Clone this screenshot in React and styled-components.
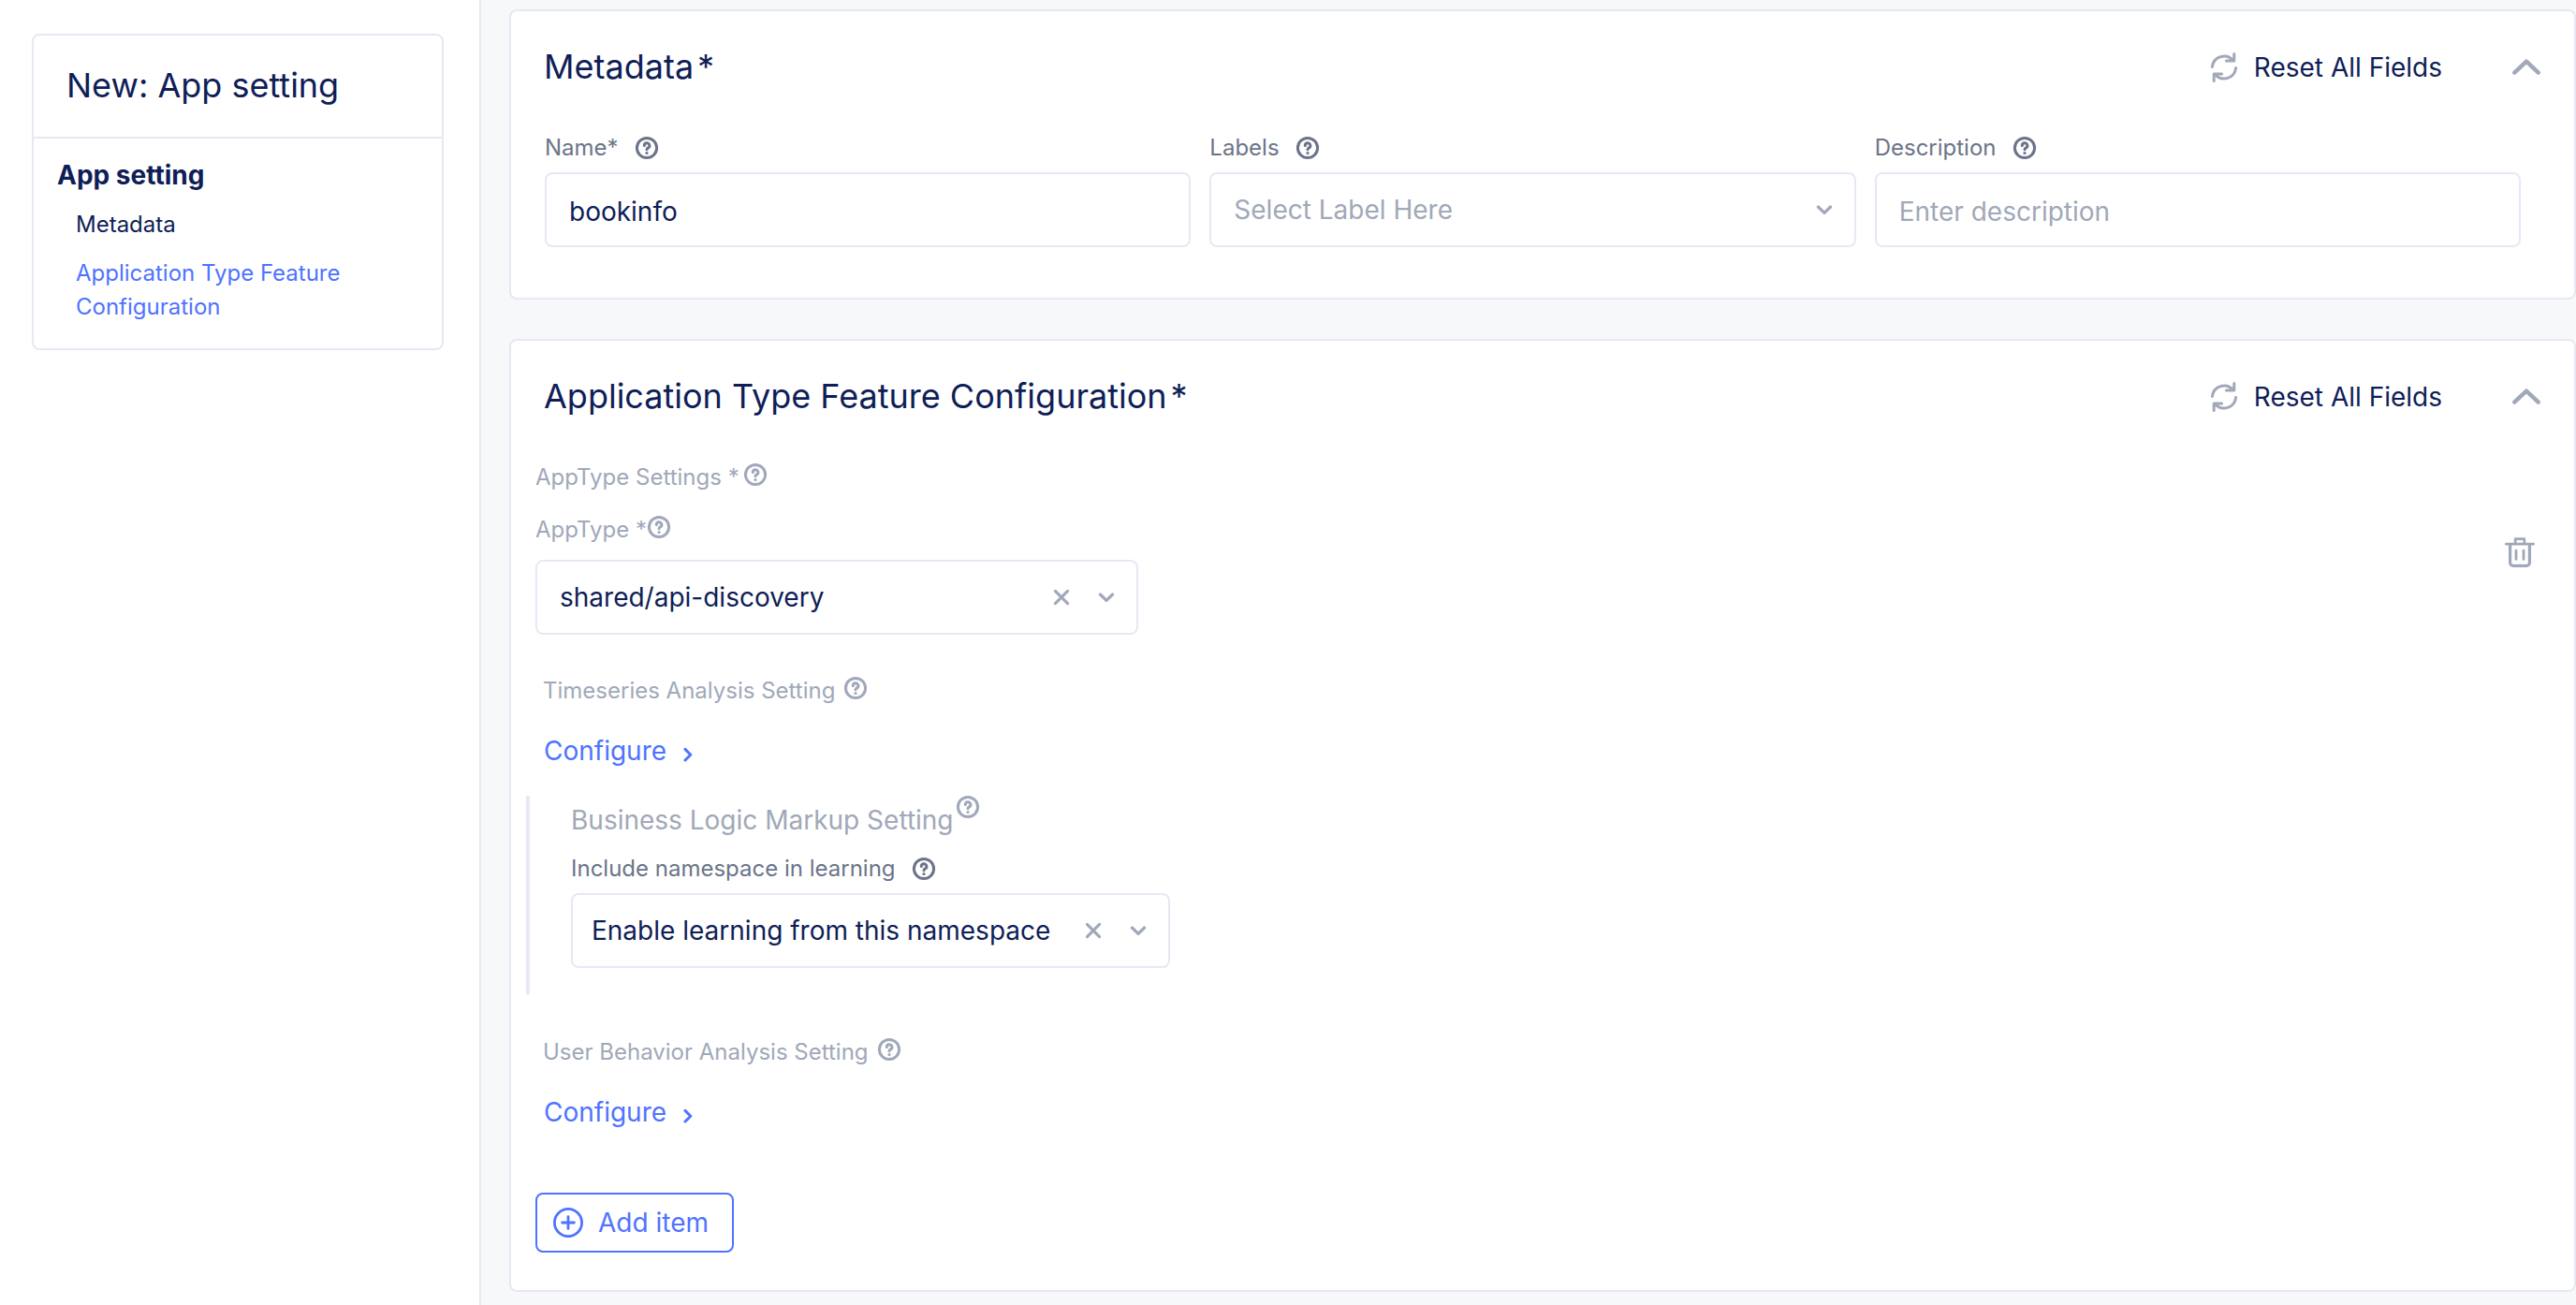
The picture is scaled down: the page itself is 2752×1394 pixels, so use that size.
import React, { useId, useState } from "react";
import styled, { createGlobalStyle } from "styled-components";

const color = {
  ink: "#0f1e57",
  blue: "#4f73ff",
  label: "#6b7489",
  muted: "#a0a8b9",
  line: "#e6e9f3",
  canvas: "#f7f8fa",
};

const GlobalStyle = createGlobalStyle`
  *, *::before, *::after { box-sizing: border-box; }
  html, body { margin: 0; }
  body {
    background: ${color.canvas};
    color: ${color.ink};
    font-family: Inter, "Liberation Sans", sans-serif;
    font-size: 28px;
    line-height: 36px;
  }
  button, input, select { font: inherit; color: inherit; }
`;

const Page = styled.div`
  display: flex;
  min-height: 100vh;
`;

const Sidebar = styled.aside`
  flex: 0 0 514px;
  padding: 36px 38px 36px 34px;
  background: #fff;
  border-right: 2px solid ${color.line};
`;

const Outline = styled.nav`
  border: 2px solid ${color.line};
  border-radius: 8px;
`;

const OutlineTitle = styled.h1`
  margin: 0;
  padding: 31px 35px 33px;
  border-bottom: 2px solid ${color.line};
  font-size: 36px;
  font-weight: 400;
  line-height: 44px;
`;

const OutlineBody = styled.div`
  display: flex;
  flex-direction: column;
  gap: 16px;
  padding: 20px 25px 26px;
`;

const OutlineGroup = styled.h2`
  margin: 0;
  font-size: 28px;
  font-weight: 700;
  line-height: 38px;
`;

const OutlineLink = styled.a`
  padding-left: 20px;
  font-size: 24px;
  text-decoration: none;
  color: ${(p) => (p.$active ? color.blue : color.ink)};
`;

const Main = styled.main`
  flex: 1;
  min-width: 0;
  display: flex;
  flex-direction: column;
  gap: 42px;
  padding: 10px 0 14px 30px;
`;

const Card = styled.section`
  background: #fff;
  border: 2px solid ${color.line};
  border-radius: 8px;
`;

const CardHeader = styled.header`
  display: flex;
  align-items: center;
  height: 48px;
  margin: 35px 34px 46px 35px;
`;

const CardTitle = styled.h2`
  display: flex;
  gap: 4px;
  flex: 1;
  margin: 0;
  font-size: 36px;
  font-weight: 400;
  line-height: 44px;
`;

const PlainButton = styled.button`
  display: inline-flex;
  align-items: center;
  flex: none;
  padding: 0;
  border: 0;
  background: none;
  cursor: pointer;
`;

const ResetButton = styled(PlainButton)`
  gap: 16px;
  margin-right: 73px;
  padding-top: 2px;
`;

const FieldGrid = styled.div`
  display: grid;
  grid-template-columns: repeat(3, minmax(0, 1fr));
  gap: 20px;
  padding: 0 57px 54px 36px;
`;

const Field = styled.div`
  display: flex;
  flex-direction: column;
  gap: ${(p) => p.$gap || 9}px;
  width: ${(p) => p.$width || "auto"};
  max-width: 100%;
`;

const LabelRow = styled.div`
  display: flex;
  align-items: ${(p) => (p.$raised ? "flex-start" : "center")};
  gap: ${(p) => p.$gap ?? 17}px;
  font-size: 24px;
  line-height: 34px;
  color: ${(p) => (p.$muted ? color.muted : color.label)};
`;

const TextInput = styled.input`
  width: 100%;
  height: 80px;
  padding: 4px 24px 0;
  border: 2px solid ${color.line};
  border-radius: 8px;
  background: #fff;
  outline: none;
  &::placeholder { color: ${color.muted}; opacity: 1; }
`;

const SelectBox = styled.div`
  display: flex;
  align-items: center;
  gap: 20px;
  height: 80px;
  padding: 0 18px 0 ${(p) => p.$inset || 24}px;
  border: 2px solid ${color.line};
  border-radius: 8px;
  background: #fff;
  color: ${color.muted};
`;

const NativeSelect = styled.select`
  flex: 1;
  min-width: 0;
  height: 100%;
  padding: 0;
  border: 0;
  outline: none;
  appearance: none;
  background: none;
  color: ${(p) => (p.$empty ? color.muted : color.ink)};
`;

const Settings = styled.div`
  display: flex;
  flex-direction: column;
  align-items: flex-start;
  padding: 0 42px 40px 16px;
`;

const Inset = styled.div`
  padding-left: 10px;
`;

const Item = styled.div`
  display: flex;
  align-items: flex-start;
  justify-content: space-between;
  align-self: stretch;
  margin-top: 22px;
`;

const ItemBody = styled.div`
  display: flex;
  flex-direction: column;
  align-items: flex-start;
`;

const DeleteButton = styled(PlainButton)`
  margin-top: 25px;
  color: ${color.muted};
`;

const SubSetting = styled.div`
  display: flex;
  flex-direction: column;
  align-items: flex-start;
  gap: 29px;
  padding-left: 18px;
  margin-top: ${(p) => p.$top}px;
`;

const ConfigureButton = styled(PlainButton)`
  gap: 17px;
  margin-left: 1px;
  color: ${color.blue};
`;

const ChevronSlot = styled.span`
  display: flex;
  padding-top: 8px;
`;

const Branch = styled.div`
  display: flex;
  flex-direction: column;
  gap: 17px;
  margin-top: 30px;
  padding: 8px 0 28px 44px;
  border-left: 4px solid ${color.line};
`;

const BranchTitle = styled.h3`
  display: flex;
  align-items: flex-start;
  gap: 2px;
  height: 36px;
  margin: 0;
  font-size: 28px;
  font-weight: 400;
  color: ${color.muted};
`;

const BranchHelp = styled.span`
  display: flex;
  margin-top: -10px;
`;

const AddButton = styled(PlainButton)`
  gap: 16px;
  height: 64px;
  margin: 68px 0 0 10px;
  padding: 0 25px 0 17px;
  border: 2px solid ${color.blue};
  border-radius: 8px;
  color: ${color.blue};
`;

const Svg = ({ w, h = w, sw = 3, children, ...rest }) => (
  <svg
    width={w}
    height={h}
    viewBox={`0 0 ${w} ${h}`}
    fill="none"
    stroke="currentColor"
    strokeWidth={sw}
    strokeLinecap="round"
    strokeLinejoin="round"
    aria-hidden="true"
    {...rest}
  >
    {children}
  </svg>
);

const HelpIcon = () => (
  <Svg w={26} h={28} sw={3}>
    <circle cx="13" cy="14" r="10.6" />
    <path d="M10.3 11.6a2.8 2.8 0 1 1 4.2 2.3c-1 .6-1.5 1-1.5 1.8" />
    <circle cx="13" cy="19.5" r="1.6" fill="currentColor" stroke="none" />
  </Svg>
);

const RefreshIcon = () => (
  <Svg w={32} sw={3} color={color.muted}>
    <path d="M3.4 15.4A12.7 12.7 0 0 1 25.6 8.4M26.8 1.6V9H18.4" />
    <path d="M28.6 16.6A12.7 12.7 0 0 1 6.4 23.6M5.2 30.4V23H13.6" />
  </Svg>
);

const CollapseIcon = () => (
  <Svg w={34} sw={4.4} color={color.muted}>
    <path d="M4.2 23.6 17 11.6l12.8 12" />
  </Svg>
);

const DownIcon = () => (
  <Svg w={28} sw={3.2}>
    <path d="m7.4 11 6.6 6.4L20.6 11" />
  </Svg>
);

const CloseIcon = () => (
  <Svg w={28} sw={3.1}>
    <path d="m7.4 7.4 13.2 13.2M20.6 7.4 7.4 20.6" />
  </Svg>
);

const RightIcon = () => (
  <Svg w={12} h={16} sw={3}>
    <path d="m3 2.4 5.8 5.8L3 14" />
  </Svg>
);

const TrashIcon = () => (
  <Svg w={32} sw={2.8}>
    <path d="M1.4 7.2h29.2M11.2 7.2V1.6h9.6v5.6" />
    <path d="M5.6 8v19.2a3.2 3.2 0 0 0 3.2 3.2h14.4a3.2 3.2 0 0 0 3.2-3.2V8" strokeWidth="3.2" />
    <path d="M12 14.2v9.2M20 14.2v9.2" />
  </Svg>
);

const PlusIcon = () => (
  <Svg w={32} sw={2.8}>
    <circle cx="16" cy="16" r="14.6" />
    <path d="M16 9.6v12.8M9.6 16h12.8" />
  </Svg>
);

function Header({ title }) {
  return (
    <CardHeader>
      <CardTitle>
        {title}
        <span>*</span>
      </CardTitle>
      <ResetButton type="button">
        <RefreshIcon />
        Reset All Fields
      </ResetButton>
      <PlainButton type="button" aria-label={`Collapse ${title}`}>
        <CollapseIcon />
      </PlainButton>
    </CardHeader>
  );
}

function Select({ id, placeholder, option, clearable, inset }) {
  const [value, setValue] = useState(placeholder ? "" : option);
  return (
    <SelectBox $inset={inset}>
      <NativeSelect
        id={id}
        value={value}
        $empty={!value}
        onChange={(e) => setValue(e.target.value)}
      >
        <option value="">{placeholder}</option>
        {option && <option>{option}</option>}
      </NativeSelect>
      {clearable && (
        <PlainButton type="button" aria-label="Clear" onClick={() => setValue("")}>
          <CloseIcon />
        </PlainButton>
      )}
      <DownIcon />
    </SelectBox>
  );
}

function LabelledField({ label, labelGap, muted, gap, width, children }) {
  const id = useId();
  return (
    <Field $gap={gap} $width={width}>
      <LabelRow $muted={muted} $gap={labelGap} $raised={muted}>
        <label htmlFor={id}>{label}</label>
        <HelpIcon />
      </LabelRow>
      {children(id)}
    </Field>
  );
}

function ConfigureSetting({ label, top }) {
  return (
    <SubSetting $top={top}>
      <LabelRow $muted $raised $gap={9}>
        <span>{label}</span>
        <HelpIcon />
      </LabelRow>
      <ConfigureButton type="button">
        Configure
        <ChevronSlot>
          <RightIcon />
        </ChevronSlot>
      </ConfigureButton>
    </SubSetting>
  );
}

export default function App() {
  return (
    <>
      <GlobalStyle />
      <Page>
        <Sidebar>
          <Outline>
            <OutlineTitle>New: App setting</OutlineTitle>
            <OutlineBody>
              <OutlineGroup>App setting</OutlineGroup>
              <OutlineLink href="#metadata">Metadata</OutlineLink>
              <OutlineLink href="#configuration" $active>
                Application Type Feature Configuration
              </OutlineLink>
            </OutlineBody>
          </Outline>
        </Sidebar>
        <Main>
          <Card id="metadata">
            <Header title="Metadata" />
            <FieldGrid>
              <LabelledField label="Name*">
                {(id) => <TextInput id={id} defaultValue="bookinfo" />}
              </LabelledField>
              <LabelledField label="Labels">
                {(id) => <Select id={id} placeholder="Select Label Here" />}
              </LabelledField>
              <LabelledField label="Description">
                {(id) => <TextInput id={id} placeholder="Enter description" />}
              </LabelledField>
            </FieldGrid>
          </Card>
          <Card id="configuration">
            <Header title="Application Type Feature Configuration" />
            <Settings>
              <Inset>
                <LabelRow $muted $raised $gap={4}>
                  <span>AppType Settings *</span>
                  <HelpIcon />
                </LabelRow>
              </Inset>
              <Item>
                <ItemBody>
                  <Inset>
                    <LabelledField label="AppType *" muted labelGap={0} gap={15} width="644px">
                      {(id) => <Select id={id} option="shared/api-discovery" clearable />}
                    </LabelledField>
                  </Inset>
                  <ConfigureSetting label="Timeseries Analysis Setting" top={43} />
                  <Branch>
                    <BranchTitle>
                      Business Logic Markup Setting
                      <BranchHelp>
                        <HelpIcon />
                      </BranchHelp>
                    </BranchTitle>
                    <LabelledField label="Include namespace in learning" width="640px">
                      {(id) => (
                        <Select
                          id={id}
                          option="Enable learning from this namespace"
                          clearable
                          inset={20}
                        />
                      )}
                    </LabelledField>
                  </Branch>
                  <ConfigureSetting label="User Behavior Analysis Setting" top={45} />
                </ItemBody>
                <DeleteButton type="button" aria-label="Delete AppType">
                  <TrashIcon />
                </DeleteButton>
              </Item>
              <AddButton type="button">
                <PlusIcon />
                Add item
              </AddButton>
            </Settings>
          </Card>
        </Main>
      </Page>
    </>
  );
}
